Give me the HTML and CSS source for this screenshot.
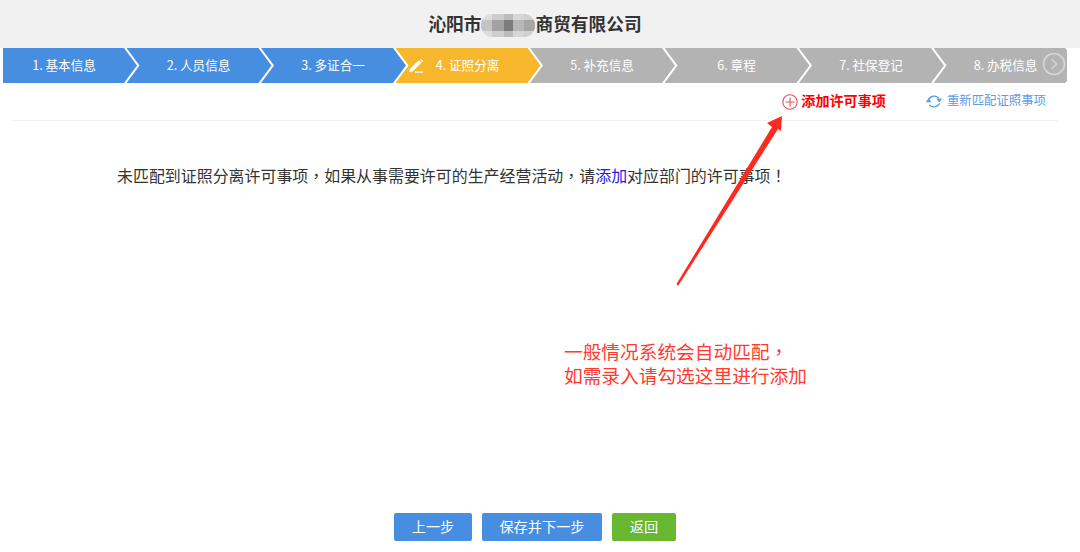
FILE: index.html
```html
<!DOCTYPE html>
<html lang="zh-CN">
<head>
<meta charset="utf-8">
<title>证照分离</title>
<link rel="stylesheet" href="styles.css">
</head>
<body>
<header class="header">
  <h1 class="title">沁阳市<span class="mosaic"></span>商贸有限公司</h1>
</header>
<div class="page">
  <nav class="steps">
    <div class="step step-first done"><span>1. 基本信息</span></div>
    <div class="step done"><span>2. 人员信息</span></div>
    <div class="step done"><span>3. 多证合一</span></div>
    <div class="step active">
      <svg class="pencil" viewBox="0 0 16 14" width="16" height="14"><path d="M1.2 13 L2 9.8 L10.8 1.2 L13.6 3.8 L4.6 12.4 Z" fill="#fff"/><path d="M12 0.4 L13 0 L15.4 2.2 L14.4 3.2 Z" fill="#fff"/><path d="M7 13.2 H15" stroke="#fff" stroke-width="1.3"/></svg>
      <span>4. 证照分离</span>
    </div>
    <div class="step"><span>5. 补充信息</span></div>
    <div class="step"><span>6. 章程</span></div>
    <div class="step"><span>7. 社保登记</span></div>
    <div class="step"><span>8. 办税信息</span></div>
    <div class="next">
      <svg viewBox="0 0 24 24" width="24" height="24"><circle cx="12" cy="12" r="10.5" fill="none" stroke="#d6d6d6" stroke-width="1.6"/><path d="M9.6 7 L14.6 12 L9.6 17" fill="none" stroke="#d6d6d6" stroke-width="1.4"/></svg>
    </div>
  </nav>
  <div class="actions">
    <a class="action-add">
      <svg class="add-icon" viewBox="0 0 16 16" width="16" height="16"><circle cx="8" cy="8" r="7.2" fill="none" stroke="#e8505a" stroke-width="1.1"/><path d="M8 3.5 V12.5 M3.5 8 H12.5" stroke="#e8505a" stroke-width="1.1"/></svg>
      <span>添加许可事项</span>
    </a>
    <a class="action-rematch">
      <svg class="sync-icon" viewBox="0 0 18 15" width="18" height="15"><path d="M3.2 6 A6.6 6.6 0 0 1 13.8 4" fill="none" stroke="#5c9ee6" stroke-width="1.3"/><path d="M11.2 4.6 H17.2 L14.2 8.4 Z" fill="#5c9ee6"/><path d="M14.8 9.2 A6.6 6.6 0 0 1 4.2 11" fill="none" stroke="#5c9ee6" stroke-width="1.3"/><path d="M0.6 8.2 H6.6 L3.6 4.6 Z" fill="#5c9ee6"/></svg>
      <span>重新匹配证照事项</span>
    </a>
  </div>
  <p class="message">未匹配到证照分离许可事项<span class="punct" lang="zh-TW">，</span>如果从事需要许可的生产经营活动<span class="punct" lang="zh-TW">，</span>请<span class="link">添加</span>对应部门的许可事项<span class="punct" lang="zh-TW">！</span></p>
  <p class="note">一般情况系统会自动匹配<span class="punct" lang="zh-TW">，</span><br>如需录入请勾选这里进行添加</p>
  <footer class="buttons">
    <button class="btn btn-prev">上一步</button>
    <button class="btn btn-next">保存并下一步</button>
    <button class="btn btn-back">返回</button>
  </footer>
</div>
<svg class="arrow" viewBox="0 0 1080 552" width="1080" height="552"><polygon points="676.5,284 772,127 767,123 782,116 781,131 778,129 678,286" fill="#ff2a1f"/></svg>
</body>
</html>
```
FILE: styles.css
```css
* { box-sizing: border-box; }
html, body { margin: 0; height: 552px; overflow: hidden; background: #fff; }
body {
  font-family: "Noto Sans CJK SC", "Liberation Sans", sans-serif;
  color: #333;
  display: flex;
  flex-direction: column;
  position: relative;
}
.header {
  height: 48px;
  background: #f1f1f1;
  width: 100%;
  flex: none;
}
.title {
  width: 1070px;
  margin: 0;
  height: 48px;
  line-height: 46px;
  text-align: center;
  font-size: 17.7px;
  font-weight: 700;
  color: #333;
}
.mosaic {
  display: inline-block;
  width: 54px;
  height: 23px;
  vertical-align: -6px;
  border-radius: 11px;
  background:
    linear-gradient(180deg, rgba(241,241,241,.55) 0 24%, rgba(241,241,241,0) 24% 76%, rgba(241,241,241,.55) 76% 100%),
    linear-gradient(90deg, #c4c4c4 0 20%, #a2a2a2 20% 42%, #7c7c7c 42% 60%, #b7b7b7 60% 80%, #a6a6a6 80% 100%);
}
.page {
  width: 1070px;
  flex: 1;
  display: flex;
  flex-direction: column;
  min-height: 0;
}
.steps {
  position: relative;
  display: flex;
  flex: none;
  height: 35px;
  margin: 0 3px;
  overflow: hidden;
  border-radius: 0 2px 2px 0;
}
.step {
  flex: none;
  width: 147px;
  margin-right: -12.5px;
  height: 35px;
  background: #b3b3b3;
  color: #fff;
  font-size: 12.6px;
  display: flex;
  align-items: center;
  justify-content: center;
  padding: 0 3px 2px 0;
  position: relative;
  clip-path: polygon(0 0, 132px 0, 145px 50%, 132px 100%, 0 100%, 13px 50%);
}
.step-first {
  margin-left: -11px;
  clip-path: polygon(0 0, 132px 0, 145px 50%, 132px 100%, 0 100%);
}
.step:last-of-type { clip-path: polygon(0 0, 100% 0, 100% 100%, 0 100%, 13px 50%); }
.done { background: #478ee0; }
.active { background: #f6b72d; }
.pencil { position: absolute; left: 12.5px; top: 11px; }
.next {
  position: absolute;
  right: 1px;
  top: 4px;
  width: 24px;
  height: 24px;
  display: flex;
}
.actions {
  flex: none;
  height: 38px;
  display: flex;
  justify-content: flex-end;
  align-items: center;
  margin: 0 12px;
  padding: 0 12px 3px 0;
  border-bottom: 1px solid #f0f0f0;
}
.action-add {
  display: flex;
  align-items: center;
  gap: 3px;
  color: #f00;
  font-size: 14.1px;
  font-weight: 700;
  margin-right: 39px;
}
.add-icon { margin-top: 3px; }
.action-rematch {
  display: flex;
  align-items: center;
  gap: 4px;
  color: #5c9ee6;
  font-size: 12.4px;
}
.sync-icon { margin-top: 2px; }
.message {
  flex: none;
  margin: 42px 0 0 117px;
  font-size: 15.95px;
  line-height: 24px;
  color: #333;
}
.link { color: #2222e0; }
.punct { font-family: "Noto Sans CJK TC", sans-serif; }
.note {
  flex: none;
  margin: 152px 0 0 564px;
  font-size: 18.7px;
  line-height: 24px;
  color: #ff3b30;
}
.buttons {
  margin-top: auto;
  margin-bottom: 11px;
  display: flex;
  justify-content: center;
  gap: 10px;
}
.btn {
  border: 0;
  height: 28px;
  padding: 0 0 2px;
  border-radius: 2px;
  color: #fff;
  font: inherit;
  font-size: 14.2px;
}
.btn-prev { width: 78px; background: #478ee0; }
.btn-next { width: 120px; background: #478ee0; }
.btn-back { width: 64px; background: #67b731; }
.arrow { position: absolute; left: 0; top: 0; pointer-events: none; }
```
